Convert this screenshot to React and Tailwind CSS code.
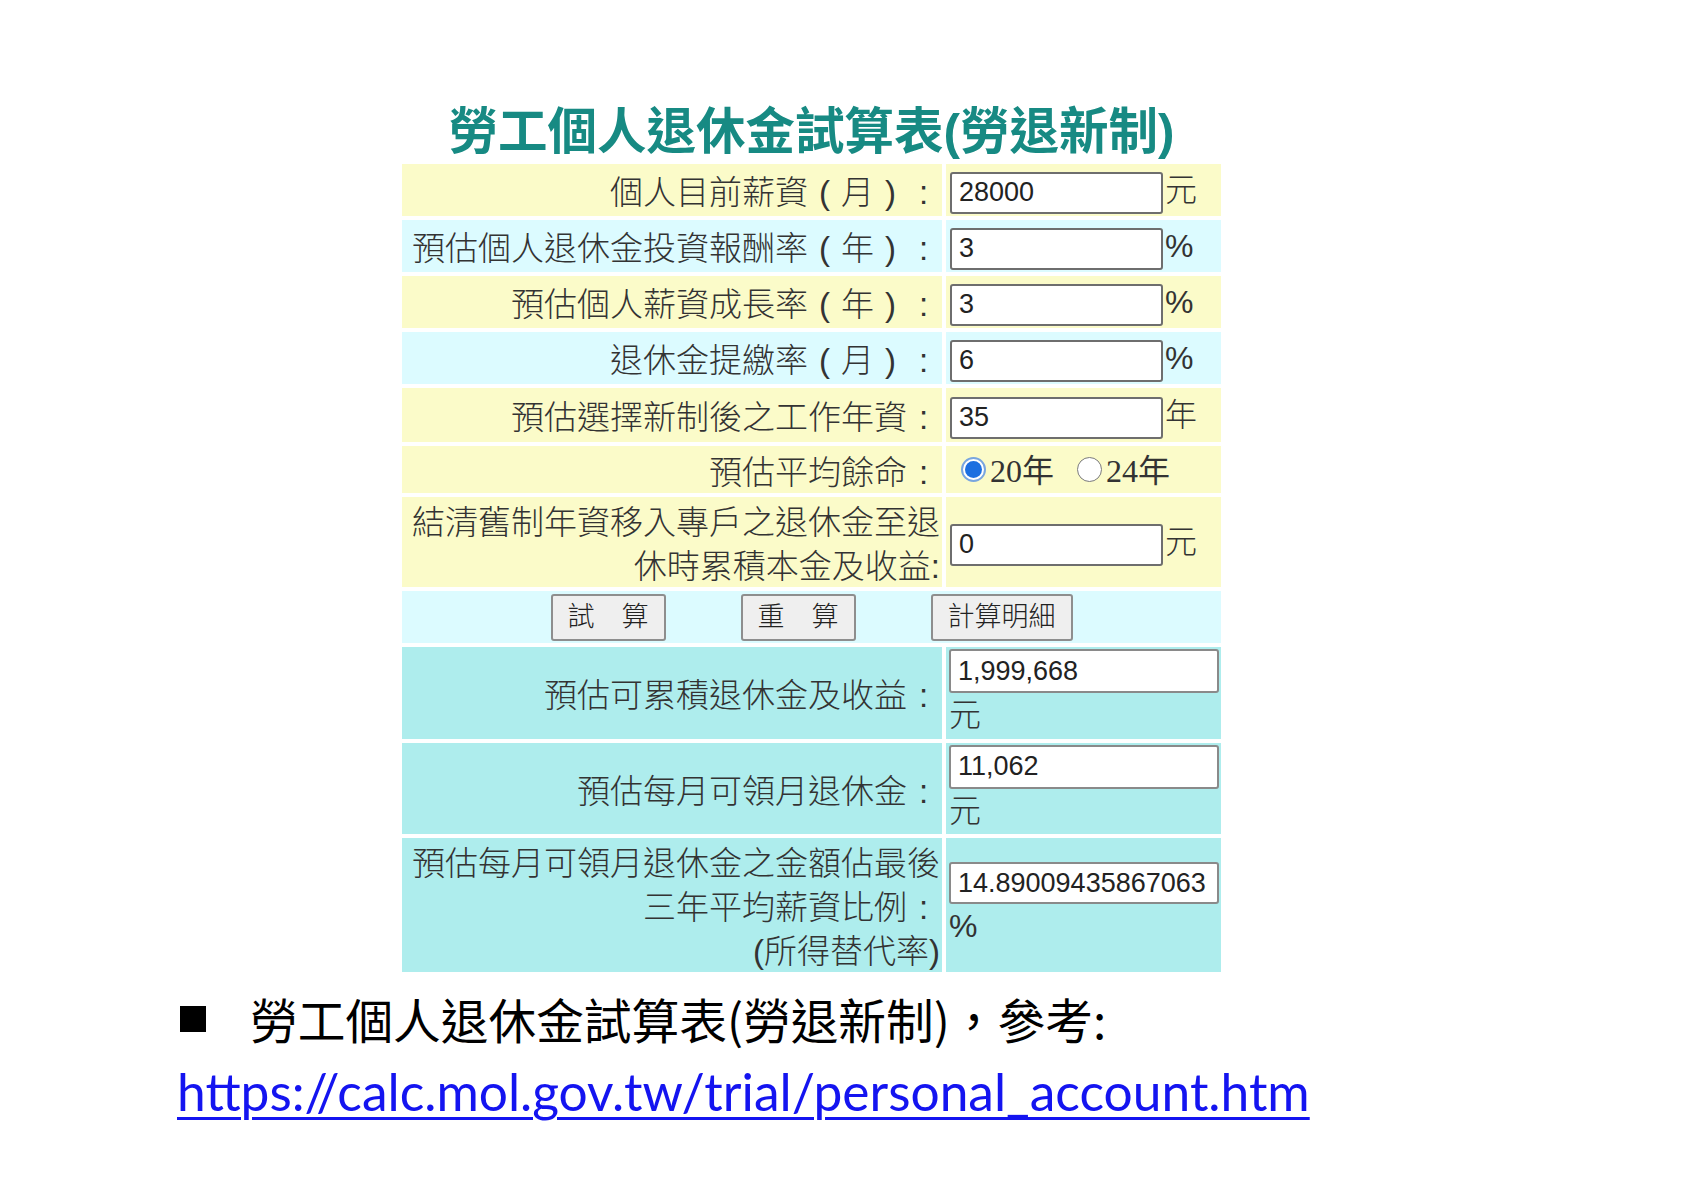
import clsx from "clsx";

const YELLOW = "bg-[#fbfbc9]";
const CYAN = "bg-[#dcfbff]";
const TEAL = "bg-[#aeeded]";

const labelFont = "font-['Liberation_Sans','Noto_Sans_CJK_TC',sans-serif]";

// full-width box with the glyph centred, the way the original page draws （ ） ：
function Fw({ c }) {
  return <span className="inline-block w-[1em] text-center">{c}</span>;
}

function Label({ children, className }) {
  return (
    <div
      className={clsx(
        "flex items-center justify-end pr-[2px] text-right text-[33px] leading-[44px] font-light text-[#333]",
        labelFont,
        className
      )}
    >
      <div className="mt-[6px]">{children}</div>
    </div>
  );
}

function InputCell({ value, unit, className }) {
  return (
    <div className={clsx("flex items-center pl-[4px]", className)}>
      <input
        readOnly
        value={value}
        className="mt-[5px] w-[213px] h-[42px] border-2 border-[#6e6e6e] rounded-[3px] bg-white px-[7px] text-[27px] text-[#222] font-['Liberation_Sans',sans-serif] outline-none"
      />
      <span className={clsx("ml-[2px] text-[32px] leading-[44px] font-light text-[#333]", labelFont)}>{unit}</span>
    </div>
  );
}

function ResultCell({ value, unit, inputClass }) {
  return (
    <div className={clsx("flex flex-col justify-center pl-[3px]", TEAL)}>
      <input
        readOnly
        value={value}
        className={clsx(
          "w-[270px] border-2 border-[#8a8a8a] rounded-[3px] bg-white px-[7px] text-[27px] text-[#222] font-['Liberation_Sans',sans-serif] outline-none",
          inputClass
        )}
      />
      <span className={clsx("text-[32px] leading-[44px] font-light text-[#333]", labelFont)}>{unit}</span>
    </div>
  );
}

function Radio({ checked }) {
  if (checked) {
    return (
      <span className="shrink-0 w-[25px] h-[25px] rounded-full border-2 border-[#79a6df] bg-white flex items-center justify-center">
        <span className="w-[17px] h-[17px] rounded-full bg-[#1c6fe0]" />
      </span>
    );
  }
  return <span className="shrink-0 block w-[25px] h-[25px] rounded-full border-[1.5px] border-[#7a7a7a] bg-white" />;
}

const inputRows = [
  { label: "個人目前薪資", paren: "月", value: "28000", unit: "元", bg: YELLOW, h: "h-[52px]" },
  { label: "預估個人退休金投資報酬率", paren: "年", value: "3", unit: "%", bg: CYAN, h: "h-[52px]" },
  { label: "預估個人薪資成長率", paren: "年", value: "3", unit: "%", bg: YELLOW, h: "h-[52px]" },
  { label: "退休金提繳率", paren: "月", value: "6", unit: "%", bg: CYAN, h: "h-[52px]" },
  { label: "預估選擇新制後之工作年資", value: "35", unit: "年", bg: YELLOW, h: "h-[54px]" },
];

export default function App() {
  return (
    <div className="min-h-screen bg-white pt-[100px]">
      <div className="ml-[402px] w-[819px]">
        <h1 className="h-[64px] flex items-center justify-center text-[49.5px] leading-[56px] font-bold text-[#178a83] font-['Liberation_Sans','Noto_Sans_CJK_TC',sans-serif]">
          勞工個人退休金試算表(勞退新制)
        </h1>

        <div className="grid grid-cols-[540px_275px] gap-x-[4px] gap-y-[4px]">
          {inputRows.map((r) => (
            <div key={r.label} className="contents">
              <Label className={clsx(r.bg, r.h)}>
                {r.label}
                {r.paren && (
                  <>
                    <Fw c="(" />
                    {r.paren}
                    <Fw c=")" />
                  </>
                )}
                <Fw c=":" />
              </Label>
              <InputCell value={r.value} unit={r.unit} className={r.bg} />
            </div>
          ))}

          {/* 餘命 */}
          <Label className={clsx(YELLOW, "h-[47px]")}>
            預估平均餘命
            <Fw c=":" />
          </Label>
          <div
            className={clsx(
              "h-[47px] flex items-center pl-[15px] text-[32px] leading-[40px] text-[#333] font-['Liberation_Serif','Noto_Sans_CJK_TC',serif]",
              YELLOW
            )}
          >
            <Radio checked />
            <span className="ml-[4px] mt-[3px]">20年</span>
            <span className="ml-[23px]">
              <Radio />
            </span>
            <span className="ml-[4px] mt-[3px]">24年</span>
          </div>

          <Label className={clsx(YELLOW, "h-[90px]")}>
            結清舊制年資移入專戶之退休金至退
            <br />
            休時累積本金及收益:
          </Label>
          <InputCell value="0" unit="元" className={YELLOW} />

          <div className={clsx("col-span-2 h-[52px] flex items-center justify-center gap-[75px]", CYAN)}>
            {["試　算", "重　算", "計算明細"].map((t, i) => (
              <button
                key={t}
                className={clsx(
                  "h-[47px] bg-[#efefef] border-2 border-[#8e8e8e] rounded-[3px] text-[27px] font-light text-[#222]",
                  labelFont,
                  i === 2 ? "w-[142px]" : "w-[115px]"
                )}
              >
                {t}
              </button>
            ))}
          </div>

          <Label className={clsx(TEAL, "h-[92px]")}>
            預估可累積退休金及收益
            <Fw c=":" />
          </Label>
          <ResultCell value="1,999,668" unit="元" inputClass="h-[44px]" />

          <Label className={clsx(TEAL, "h-[91px]")}>
            預估每月可領月退休金
            <Fw c=":" />
          </Label>
          <ResultCell value="11,062" unit="元" inputClass="h-[44px]" />

          <Label className={clsx(TEAL, "h-[134px] leading-[43px]")}>
            預估每月可領月退休金之金額佔最後
            <br />
            三年平均薪資比例
            <Fw c=":" />
            <br />
            (所得替代率)
          </Label>
          <ResultCell value="14.89009435867063" unit="%" inputClass="h-[42px]" />
        </div>
      </div>

      <div className="ml-[180px] mt-[17px]">
        <div className="flex items-center h-[60px] text-[47.7px] text-black font-['Noto_Sans_CJK_TC',sans-serif]">
          <span className="w-[26px] h-[26px] bg-black mr-[44px]" />
          <span>勞工個人退休金試算表(勞退新制)，參考:</span>
        </div>
        <a
          href="#"
          className="block mt-[10px] -ml-[3px] h-[64px] leading-[64px] text-[51.5px] text-[#1414f0] underline decoration-[3px] underline-offset-[6px] font-['Lato',sans-serif]"
        >
          https://calc.mol.gov.tw/trial/personal_account.htm
        </a>
      </div>
    </div>
  );
}
